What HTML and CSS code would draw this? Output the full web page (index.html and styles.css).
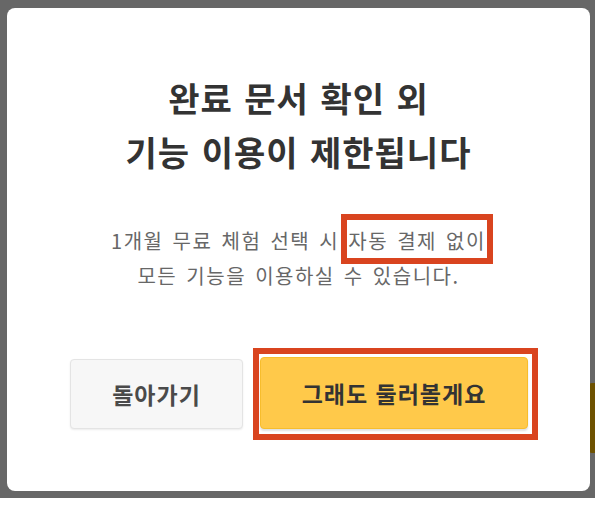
FILE: index.html
```html
<!DOCTYPE html>
<html lang="ko">
<head>
    <meta charset="UTF-8">
    <meta name="viewport" content="width=device-width, initial-scale=1.0">
    <title>무료 체험 안내</title>
    <link rel="stylesheet" href="styles.css">
</head>
<body>
    <div class="overlay">
        <div class="under-button"></div>
        <div class="dialog">
            <h1 class="dialog-title">완료 문서 확인 외<br>기능 이용이 제한됩니다</h1>
            <p class="dialog-text">
                1개월 무료 체험 선택 시 <span class="mark">자동 결제 없이</span><br>
                모든 기능을 이용하실 수 있습니다.
            </p>
            <div class="button-row">
                <button class="back-button">돌아가기</button>
                <div class="mark-box">
                    <button class="primary-button">그래도 둘러볼게요</button>
                </div>
            </div>
        </div>
    </div>
</body>
</html>
```

FILE: styles.css
```css
body {
    margin: 0;
    padding: 0;
    background-color: #ffffff;
    font-family: "Noto Sans CJK KR", "Noto Sans", sans-serif;
}

.overlay {
    position: relative;
    width: 595px;
    height: 498px;
    background-color: #676767;
    padding: 8px 0 0 7px;
    box-sizing: border-box;
}

.under-button {
    position: absolute;
    right: 0;
    top: 383px;
    width: 6px;
    height: 70px;
    background-color: #6e5200;
    border-radius: 3px 0 0 3px;
}

.dialog {
    position: relative;
    width: 583px;
    height: 483px;
    background-color: #ffffff;
    border-radius: 8px;
    padding-top: 63px;
    box-sizing: border-box;
    text-align: center;
}

.dialog-title {
    margin: 0;
    font-size: 34px;
    line-height: 54px;
    font-weight: 700;
    letter-spacing: 1px;
    word-spacing: 1px;
    color: #333333;
}

.dialog-text {
    margin: 44px 0 0;
    font-size: 20px;
    line-height: 35px;
    letter-spacing: 1.5px;
    word-spacing: 2px;
    color: #676767;
}

.mark {
    position: relative;
}

.mark::after {
    content: "";
    position: absolute;
    left: -7px;
    right: -7px;
    top: -12px;
    bottom: -9px;
    border: 6px solid #d9441f;
}

.button-row {
    display: flex;
    align-items: center;
    margin-top: 55px;
    padding-left: 63px;
}

.back-button {
    width: 173px;
    height: 70px;
    background-color: #f7f7f7;
    border: 1px solid #e4e4e4;
    border-radius: 4px;
    box-shadow: 0 1px 2px rgba(0, 0, 0, 0.08);
    font-family: inherit;
    font-size: 23px;
    font-weight: 700;
    letter-spacing: 1px;
    color: #4a4a4a;
}

.mark-box {
    margin-left: 10px;
    border: 6px solid #d9441f;
    padding: 3px 4px 5px 1px;
    background-color: #ffffff;
}

.primary-button {
    display: block;
    width: 268px;
    height: 72px;
    background-color: #ffc94a;
    border: 1px solid #f7bd2c;
    border-radius: 4px;
    box-shadow: 0 2px 2px rgba(0, 0, 0, 0.12);
    font-family: inherit;
    font-size: 23px;
    font-weight: 700;
    letter-spacing: 1px;
    color: #333333;
}
```
